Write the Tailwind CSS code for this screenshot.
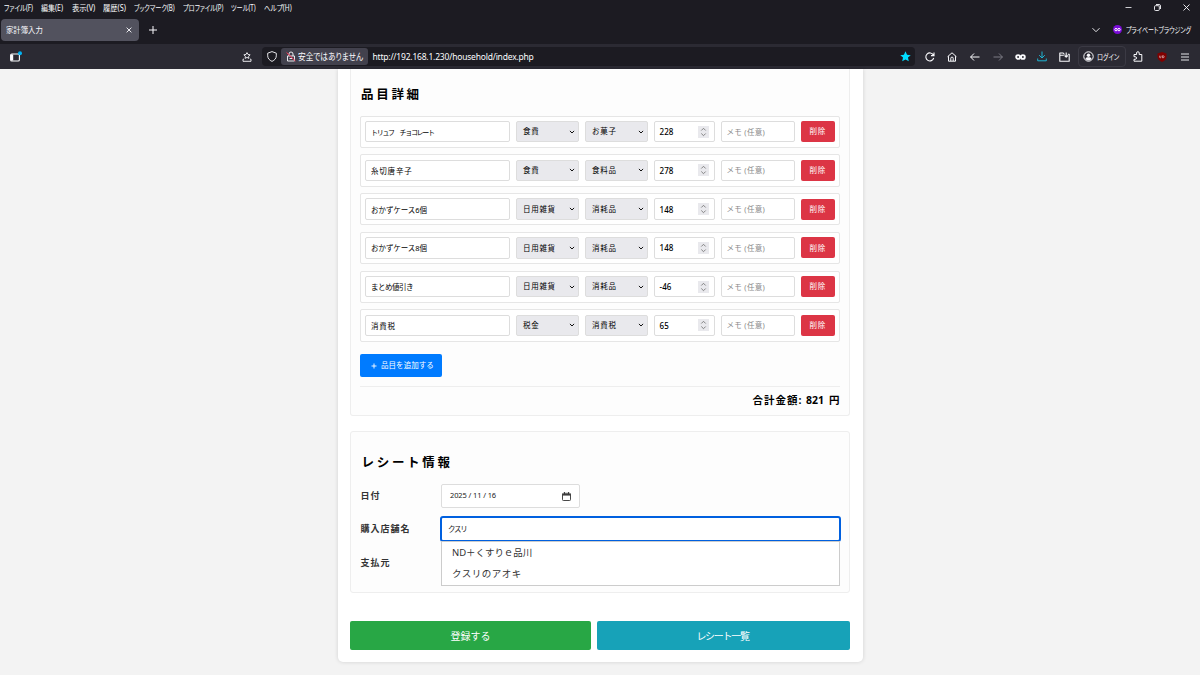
<!DOCTYPE html>
<html lang="ja">
<head>
    <meta charset="UTF-8">
    <meta name="viewport" content="width=device-width, initial-scale=1.0">
    <title>家計簿入力</title>
    <script src="https://cdn.jsdelivr.net/npm/@tailwindcss/browser@4"></script>
</head>
<body class="h-screen overflow-hidden flex flex-col bg-[#f3f3f3] font-['Noto_Sans','Noto_Sans_CJK_JP',sans-serif] text-[8px] leading-none text-[#222]">

    <!-- Browser chrome -->
    <header class="h-[69px] shrink-0 flex flex-col bg-[#1c1b22] text-[#fbfbfe]">
        <div class="h-[15px] flex items-center pl-1 pr-[10px] whitespace-nowrap [font-feature-settings:'palt']">
            <span class="w-[37px] origin-left scale-x-[0.79]">ファイル(F)</span>
            <span class="w-[31px] origin-left scale-x-[0.87]">編集(E)</span>
            <span class="w-[31px] origin-left scale-x-[0.91]">表示(V)</span>
            <span class="w-[31px] origin-left scale-x-[0.91]">履歴(S)</span>
            <span class="w-[49px] origin-left scale-x-[0.77]">ブックマーク(B)</span>
            <span class="w-[48px] origin-left scale-x-[0.77]">プロファイル(P)</span>
            <span class="w-[33px] origin-left scale-x-[0.77]">ツール(T)</span>
            <span class="origin-left scale-x-[0.82]">ヘルプ(H)</span>
            <div class="ml-auto flex items-center gap-[22px]">
                <svg class="w-[7px] h-[7px]" viewBox="0 0 7 7" fill="none" stroke="currentColor" stroke-width="0.8"><path d="M0.5 3.5h6"/></svg>
                <svg class="w-[7px] h-[7px]" viewBox="0 0 7 7" fill="none" stroke="currentColor" stroke-width="0.9"><rect x="0.5" y="1.7" width="4.8" height="4.8" rx="1"/><path d="M2 0.5h3a1.5 1.5 0 0 1 1.5 1.5v3"/></svg>
                <svg class="w-[7px] h-[7px]" viewBox="0 0 7 7" fill="none" stroke="currentColor" stroke-width="0.9"><path d="M0.5 0.5l6 6M6.5 0.5l-6 6"/></svg>
            </div>
        </div>
        <div class="h-[29px] flex items-center pl-[1px] pr-[7px]">
            <div class="w-[138px] h-[22px] flex items-center justify-between rounded bg-[#52525e] pl-[5px] pr-[7px]">
                <span class="pt-px origin-left scale-x-[0.92]">家計簿入力</span>
                <svg class="w-[6px] h-[6px]" viewBox="0 0 6 6" fill="none" stroke="currentColor" stroke-width="0.9"><path d="M0.6 0.6l4.8 4.8M5.4 0.6l-4.8 4.8"/></svg>
            </div>
            <svg class="w-2 h-2 ml-[10px]" viewBox="0 0 8 8" fill="none" stroke="currentColor" stroke-width="1"><path d="M4 0v8M0 4h8"/></svg>
            <svg class="w-2 h-2 ml-auto" viewBox="0 0 8 8" fill="none" stroke="currentColor" stroke-width="0.9"><path d="M0.5 2.2L4 5.7l3.5-3.5"/></svg>
            <svg class="w-[9px] h-[9px] ml-[13px]" viewBox="0 0 9 9"><circle cx="4.5" cy="4.5" r="4.5" fill="#7a0bd8"/><g fill="none" stroke="#fff" stroke-width="1"><circle cx="3" cy="4.6" r="1.2"/><circle cx="6" cy="4.6" r="1.2"/></g></svg>
            <span class="ml-1 w-[67px] whitespace-nowrap origin-left scale-x-[0.75] [font-feature-settings:'palt']">プライベートブラウジング</span>
        </div>
        <div class="flex-1 flex items-center bg-[#2b2a33] pl-[10px] pr-[10.5px]">
            <svg class="w-3 h-3" viewBox="0 0 12 12"><rect x="0.6" y="3" width="8.8" height="7" rx="1.3" fill="none" stroke="#fbfbfe" stroke-width="1.1"/><path d="M1 3.5h2.2v6H1z" fill="#fbfbfe"/><circle cx="10" cy="2.2" r="2" fill="#00b3f4"/></svg>
            <svg class="w-[10px] h-[10px] ml-[220px]" viewBox="0 0 10 10" fill="none" stroke="currentColor" stroke-width="0.9" stroke-linejoin="round"><path d="M5 0.6l1 1.9 2.1.3-1.5 1.5.3 2.1L5 5.4 3.1 6.4l.3-2.1-1.5-1.5 2.1-.3zM1.9 7.2H1v2.1h8V7.2h-.9"/></svg>

            <div class="ml-[10px] w-[653px] h-[19px] flex items-center rounded bg-[#1c1b22] pl-[5px] pr-[4px]">
                <svg class="w-[10px] h-[11px]" viewBox="0 0 10 11" fill="none" stroke="currentColor" stroke-width="0.9" stroke-linejoin="round"><path d="M5 0.6L9.3 2.2v2.6c0 2.6-1.7 4.4-4.3 5.6C2.4 9.2.7 7.4.7 4.8V2.2z"/></svg>
                <div class="ml-[4px] w-[87px] h-[17px] flex items-center rounded-[3px] bg-[#42414d] pl-[5px]">
                    <svg class="w-[10px] h-[11px] shrink-0" viewBox="0 0 10 11" fill="none"><path d="M3 5V3a2 2 0 0 1 4 0v2M1.5 5h7v5h-7zM3.5 7.5h3" stroke="#fbfbfe" stroke-width="0.9"/><path d="M0.6 1.5l8.8 8.5" stroke="#ff3355" stroke-width="1"/></svg>
                    <span class="ml-[2px] text-[9px] whitespace-nowrap origin-left scale-x-[0.85] [font-feature-settings:'palt']">安全ではありません</span>
                </div>
                <span class="ml-[4.5px] pt-[2px] text-[8.5px] tracking-[-0.2px]">http://192.168.1.230/household/index.php</span>
                <svg class="w-[11px] h-[11px] ml-auto" viewBox="0 0 12 12" fill="#00ddff"><path d="M6 0.4l1.7 3.7 4 .4-3 2.7.9 4L6 9.2l-3.6 2 .9-4-3-2.7 4-.4z"/></svg>
            </div>

            <svg class="w-[10px] h-[10px] ml-[10px]" viewBox="0 0 10 10" fill="none" stroke="currentColor" stroke-width="1.1"><path d="M8.7 6A4 4 0 1 1 8.3 2.9M9 0.6v3H6"/></svg>
            <svg class="w-[10px] h-[10px] ml-[12px]" viewBox="0 0 10 10" fill="none" stroke="currentColor" stroke-width="1" stroke-linejoin="round"><path d="M0.6 4.7L5 0.8l4.4 3.9M1.5 4.2v5h7v-5M3.8 9V6.3a1.2 1.2 0 0 1 2.4 0V9"/></svg>
            <svg class="w-[10px] h-[10px] ml-[13px]" viewBox="0 0 10 10" fill="none" stroke="currentColor" stroke-width="1"><path d="M9.5 5h-9M4 1.5L0.6 5 4 8.5"/></svg>
            <svg class="w-[10px] h-[10px] ml-[12.5px] text-[#7c7b85]" viewBox="0 0 10 10" fill="none" stroke="currentColor" stroke-width="1"><path d="M0.5 5h9M6 1.5L9.4 5 6 8.5"/></svg>
            <svg class="w-[11px] h-[10px] ml-[12px]" viewBox="0 0 11 10" fill="none" stroke="currentColor" stroke-width="1.9"><circle cx="3.1" cy="5" r="1.9"/><circle cx="7.9" cy="5" r="1.9"/></svg>
            <svg class="w-[10px] h-[11px] ml-[11.5px] text-[#1fb4d3]" viewBox="0 0 10 11" fill="none" stroke="currentColor" stroke-width="1"><path d="M5 0.5v6.5M2.2 4.2L5 7l2.8-2.8M0.7 7.5v2.3h8.6V7.5"/></svg>
            <svg class="w-[11px] h-[10px] ml-[12px]" viewBox="0 0 11 10" fill="none" stroke="currentColor" stroke-width="1.1" stroke-linejoin="round"><path d="M8.8 2.3h1.4v7H0.8V1h3.4l1.3 1.5M0.8 3.3h4M7.2 0.5v4.5M5.6 3.5l1.6 1.6 1.6-1.6"/></svg>
            <div class="ml-[7.5px] w-[48px] h-[21px] flex items-center rounded border border-[#3b3a44] pl-[4px]">
                <svg class="w-[11px] h-[11px] shrink-0" viewBox="0 0 11 11"><circle cx="5.5" cy="5.5" r="4.7" fill="none" stroke="#fbfbfe" stroke-width="1"/><circle cx="5.5" cy="4.2" r="1.7" fill="#fbfbfe"/><path d="M2.4 8c.5-1.4 1.5-1.7 3.1-1.7S8.1 6.6 8.6 8a4 4 0 0 1-6.2 0z" fill="#fbfbfe"/></svg>
                <span class="ml-[3px] whitespace-nowrap origin-left scale-x-[0.76] [font-feature-settings:'palt']">ログイン</span>
            </div>
            <svg class="w-[10px] h-[11px] ml-[7px]" viewBox="0 0 10 11" fill="none" stroke="currentColor" stroke-width="1" stroke-linejoin="round"><path d="M1 3.5h2.6V2a1.3 1.3 0 0 1 2.6 0v1.5h2.6v6.7H1V8.3h1.2a1.3 1.3 0 0 0 0-2.6H1z"/></svg>
            <svg class="w-[10px] h-[10px] ml-[14px]" viewBox="0 0 10 10"><path d="M5 0l4.5 1.5v3C9.5 7 8 8.8 5 10 2 8.8.5 7 .5 4.5v-3z" fill="#800000"/><path d="M2.6 3.7v1.4q0 .7.7.7t.7-.7V3.7M5.5 3.7v2.1h.5q1.2 0 1.2-1.05T6 3.7z" fill="none" stroke="#fff" stroke-width="0.5"/></svg>
            <svg class="w-[8px] h-[8px] ml-[14.5px]" viewBox="0 0 8 8" fill="none" stroke="currentColor" stroke-width="0.9"><path d="M0 1h8M0 4h8M0 7h8"/></svg>
        </div>
    </header>

    <main class="w-[525px] h-[593px] mx-auto shrink-0 flex flex-col bg-white rounded-b-[5px] shadow-[0_0_4px_rgba(0,0,0,0.14)] px-[12.5px]">
        <!-- Item details -->
        <section class="h-[346.5px] flex flex-col bg-[#fdfdfd] border border-t-0 border-[#eee] rounded-b-[3px] pl-[9px] pr-[9.5px]">
            <h2 class="h-[46.5px] pt-[19px] pl-[1px] text-[12.5px] leading-[13px] font-bold tracking-[2.7px] text-black">品目詳細</h2>
            <div id="items" class="flex flex-col gap-[6.5px]"></div>
            <button class="mt-[12.5px] w-[82px] h-[23px] shrink-0 flex items-center rounded-[2px] bg-[#007bff] text-white text-[7.5px] pl-[11px] whitespace-nowrap">
                <svg class="w-[6px] h-[6px] mr-[4px]" viewBox="0 0 6 6" fill="none" stroke="currentColor" stroke-width="0.9"><path d="M3 0.5v5M0.5 3h5"/></svg>
                <span class="tracking-[0.05px]">品目を追加する</span>
            </button>
            <div class="mt-[9px] border-t border-[#eee] pt-[7px] flex justify-end text-[10.5px] leading-[12px] font-bold text-black whitespace-pre"><span class="w-[51px] tracking-[1px]">合計金額:</span><span class="tracking-[-0.1px]"> 821  円</span></div>
        </section>

        <!-- Receipt info -->
        <section class="mt-[15.5px] h-[162px] flex flex-col bg-[#fdfdfd] border border-[#eee] rounded-[3px] pl-[9.5px] pr-[8.5px]">
            <h2 class="h-[52px] pt-[24px] pl-[1px] text-[12.5px] leading-[13px] font-bold tracking-[2.7px] text-black">レシート情報</h2>
            <div class="h-[24px] flex items-center">
                <span class="w-[80.5px] pb-px font-bold text-[9px] tracking-[1px] text-[#333]">日付</span>
                <div class="w-[139px] h-[24px] flex items-center justify-between bg-white border border-[#ddd] rounded-[2px] pl-[8px] pr-[8px]">
                    <span class="text-[7.5px] tracking-[-0.12px]">2025 / 11 / 16</span>
                    <svg class="w-[9px] h-[9px]" viewBox="0 0 9 9" fill="none" stroke="#333" stroke-width="0.9"><rect x="0.5" y="1.3" width="8" height="7.2" rx="0.8"/><path d="M0.5 2.8h8" stroke-width="1.5"/><path d="M2.5 0v2M6.5 0v2"/></svg>
                </div>
            </div>
            <div class="mt-[7.5px] h-[26px] flex items-center">
                <span class="w-[79.5px] shrink-0 pb-px font-bold text-[9px] tracking-[1px] text-[#333]">購入店舗名</span>
                <div class="relative w-[401px] h-[26px] shrink-0">
                    <input type="text" value="クスリ" class="w-full h-full bg-white border-2 border-[#0060df] rounded-[3px] pl-[6px] pb-px text-[7.5px] tracking-[-1.3px]">
                    <ul class="absolute left-[1px] top-[25px] w-[399px] h-[45px] bg-white border border-[#ccc] text-[9.5px] text-[#333]">
                        <li class="h-[21.5px] flex items-center pl-[10px] tracking-[-0.05px]">ND＋くすりｅ品川</li>
                        <li class="h-[21.5px] flex items-center pl-[10px] tracking-[0.5px]">クスリのアオキ</li>
                    </ul>
                </div>
            </div>
            <div class="mt-[8px] h-[24px] flex items-center">
                <span class="pt-px font-bold text-[9px] tracking-[1px] text-[#333]">支払元</span>
            </div>
        </section>

        <div class="mt-[28px] h-[29px] flex gap-[6px] text-[10px] text-white">
            <button class="w-[241px] rounded-[2px] bg-[#28a745]">登録する</button>
            <button class="flex-1 rounded-[2px] bg-[#17a2b8] pr-[2px] tracking-[-1.3px]">レシート一覧</button>
        </div>
    </main>

    <script>
        const items = [
            { name: 'トリュフ　チョコレート', spacing: 'text-[7px] tracking-[-1.3px]', cat: '食費', sub: 'お菓子', price: 228 },
            { name: '糸切唐辛子', spacing: 'text-[7.5px] tracking-[0.8px]', cat: '食費', sub: '食料品', price: 278 },
            { name: 'おかずケース6個', spacing: 'text-[7.5px] tracking-[-0.05px]', cat: '日用雑貨', sub: '消耗品', price: 148 },
            { name: 'おかずケース8個', spacing: 'text-[7.5px] tracking-[-0.05px]', cat: '日用雑貨', sub: '消耗品', price: 148 },
            { name: 'まとめ値引き', spacing: 'text-[7.5px] tracking-[-0.5px]', cat: '日用雑貨', sub: '消耗品', price: -46 },
            { name: '消費税', spacing: 'text-[7.5px] tracking-[0.8px]', cat: '税金', sub: '消費税', price: 65 }
        ];

        const select = (label) => `
            <div class="w-[63px] h-[21.5px] flex items-center justify-between bg-[#e9e9ed] border border-[#ddd] rounded-[2px] pl-[6px] pr-[3px]">
                <span class="pt-px text-[7.5px] tracking-[0.7px] text-black">${label}</span>
                <svg class="w-[6px] h-[6px]" viewBox="0 0 6 6" fill="none" stroke="#111" stroke-width="1"><path d="M0.9 1.9L3 4l2.1-2.1"/></svg>
            </div>`;

        document.getElementById('items').innerHTML = items.map((item) => `
            <div class="h-[32.25px] flex items-center gap-[6px] bg-white border border-[#e6e6e6] rounded-[2px] pl-[4px]">
                <input type="text" value="${item.name}" class="w-[145px] h-[21.5px] bg-white border border-[#ddd] rounded-[2px] pl-[5px] text-black ${item.spacing}">
                ${select(item.cat)}
                ${select(item.sub)}
                <div class="w-[61px] h-[21.5px] flex items-center justify-between bg-white border border-[#ddd] rounded-[2px] pl-[4.5px] pr-[5px]">
                    <span class="pt-px font-medium tracking-[0.1px] text-black">${item.price}</span>
                    <svg class="w-[11px] h-[12px] bg-[#e9e9ed]" viewBox="0 0 11 12" fill="none" stroke="#777" stroke-width="0.9"><path d="M3.3 4.5l2.2-2.2 2.2 2.2M3.3 7.5l2.2 2.2 2.2-2.2"/></svg>
                </div>
                <input type="text" placeholder="メモ (任意)" class="w-[74px] h-[21.5px] bg-white border border-[#ddd] rounded-[2px] pl-[4.5px] text-[7.5px] tracking-[0.3px] placeholder:text-[#888]">
                <button class="w-[33.5px] h-[21px] rounded-[2px] bg-[#dc3545] pt-px text-white text-[7.5px] tracking-[0.8px]">削除</button>
            </div>`).join('');
    </script>
</body>
</html>
